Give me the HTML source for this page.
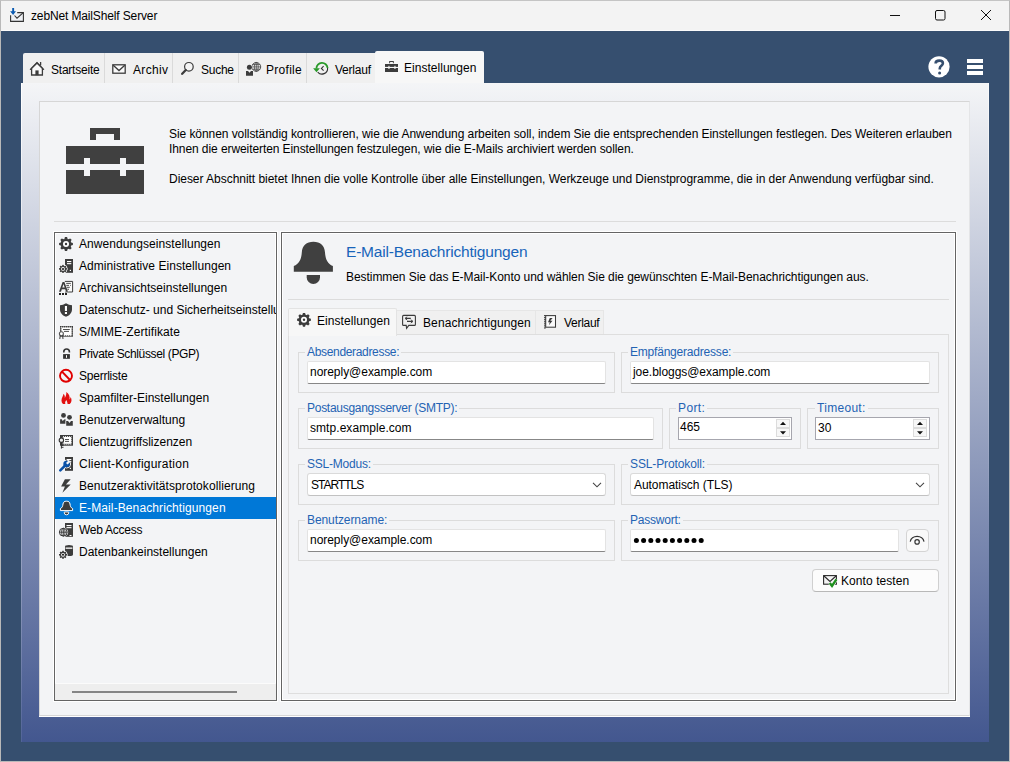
<!DOCTYPE html>
<html><head><meta charset="utf-8">
<style>
*{box-sizing:border-box;margin:0;padding:0}
html,body{width:1010px;height:762px;overflow:hidden}
body{position:relative;background:#364f6f;font-family:"Liberation Sans",sans-serif;font-size:12px;color:#000}
.a{position:absolute}
.t{position:absolute;white-space:nowrap;line-height:14px}
#frame{left:0;top:0;width:1010px;height:762px;border:1px solid #b9b9b9;border-top-color:#c4c4c4}
#title{left:1px;top:1px;width:1008px;height:30px;background:#f3f3f3;border-bottom:1px solid #fbfbfb}
.tab{position:absolute;top:53px;height:30px;background:#f0f0f0;border-right:1px solid #dadada}
.tab .t{top:10px}
#tabact{left:375px;top:51px;width:109px;height:33px;background:#f7f7f7;border-radius:2px 2px 0 0}
#outer{left:21px;top:83px;width:968px;height:659px;background:linear-gradient(#f4f5f7,#43578f)}
#inner{left:39px;top:101px;width:931px;height:615px;background:#f3f4f6;border:1px solid #d6d6d6;border-right-color:#e4e5e7;box-shadow:0 1px 0 #fff}
.li{position:absolute;left:0;width:221px;height:22px}
.li .t{left:24px;top:4px}
.grp{position:absolute;border:1px solid #dcdcdc}
.lbl{position:absolute;color:#2363b3;background:#f3f4f6;padding:0 2px;white-space:nowrap;line-height:14px;letter-spacing:-0.3px}
.inp .t,.dd .t{letter-spacing:-0.08px}
.inp{position:absolute;background:#fff;border:1px solid #e3e3e3;border-bottom:1px solid #878787;border-radius:2px}
.spin{background:#fff;border:1px solid #a6a6ae}
.dd{position:absolute;background:#fff;border:1px solid #dadada;border-bottom-color:#c2c2c2;border-radius:3px}
</style></head><body>
<div class="a" id="frame"></div>
<div class="a" id="title">
  <div class="t" style="left:30px;top:8px;letter-spacing:-0.136px">zebNet MailShelf Server</div>
</div>

<!-- tabs -->
<div class="tab" style="left:23px;width:82px;border-radius:2px 0 0 0"><div class="t" style="left:28px;letter-spacing:-0.222px">Startseite</div></div>
<div class="tab" style="left:105px;width:68px"><div class="t" style="left:28px;letter-spacing:0.340px">Archiv</div></div>
<div class="tab" style="left:173px;width:66px"><div class="t" style="left:28px;letter-spacing:-0.250px">Suche</div></div>
<div class="tab" style="left:239px;width:68px"><div class="t" style="left:27px;letter-spacing:0.283px">Profile</div></div>
<div class="tab" style="left:307px;width:68px;border-right:none"><div class="t" style="left:28px;letter-spacing:-0.217px">Verlauf</div></div>
<div class="a" id="tabact"><div class="t" style="left:29px;top:10px;letter-spacing:0.025px">Einstellungen</div></div>

<div class="a" id="outer"></div>
<div class="a" style="left:21px;top:83px;width:1px;height:659px;background:linear-gradient(#fff,rgba(255,255,255,0.55) 12%,rgba(255,255,255,0.08))"></div>
<div class="a" style="left:988px;top:83px;width:1px;height:659px;background:linear-gradient(rgba(255,255,255,0.5),rgba(255,255,255,0) 70%)"></div>
<div class="a" id="inner"></div>

<!-- header text -->
<div class="t" style="left:169px;top:127px;line-height:15px;letter-spacing:-0.065px">Sie können vollständig kontrollieren, wie die Anwendung arbeiten soll, indem Sie die entsprechenden Einstellungen festlegen. Des Weiteren erlauben</div>
<div class="t" style="left:169px;top:142px;line-height:15px;letter-spacing:-0.083px">Ihnen die erweiterten Einstellungen festzulegen, wie die E-Mails archiviert werden sollen.</div>
<div class="t" style="left:169px;top:172px;line-height:15px;letter-spacing:-0.034px">Dieser Abschnitt bietet Ihnen die volle Kontrolle über alle Einstellungen, Werkzeuge und Dienstprogramme, die in der Anwendung verfügbar sind.</div>
<div class="a" style="left:54px;top:221px;width:902px;height:1px;background:#dcdcdc"></div>

<!-- list -->
<div class="a" id="list" style="left:54px;top:232px;width:223px;height:469px;border:1px solid #646464;overflow:hidden;box-shadow:0 0 0 1px #fff,inset 0 0 0 1px #fff">
  <div class="li" style="top:0"><div class="t" style="letter-spacing:0.064px">Anwendungseinstellungen</div></div>
  <div class="li" style="top:22px"><div class="t" style="letter-spacing:0.048px">Administrative Einstellungen</div></div>
  <div class="li" style="top:44px"><div class="t">Archivansichtseinstellungen</div></div>
  <div class="li" style="top:66px"><div class="t">Datenschutz- und Sicherheitseinstellungen</div></div>
  <div class="li" style="top:88px"><div class="t" style="letter-spacing:0.088px">S/MIME-Zertifikate</div></div>
  <div class="li" style="top:110px"><div class="t" style="letter-spacing:-0.368px">Private Schlüssel (PGP)</div></div>
  <div class="li" style="top:132px"><div class="t" style="letter-spacing:-0.233px">Sperrliste</div></div>
  <div class="li" style="top:154px"><div class="t">Spamfilter-Einstellungen</div></div>
  <div class="li" style="top:176px"><div class="t">Benutzerverwaltung</div></div>
  <div class="li" style="top:198px"><div class="t">Clientzugriffslizenzen</div></div>
  <div class="li" style="top:220px"><div class="t" style="letter-spacing:0.232px">Client-Konfiguration</div></div>
  <div class="li" style="top:242px"><div class="t" style="letter-spacing:0.078px">Benutzeraktivitätsprotokollierung</div></div>
  <div class="li" style="top:264px;background:#0078d7;color:#fff"><div class="t" style="letter-spacing:0.104px">E-Mail-Benachrichtigungen</div></div>
  <div class="li" style="top:286px"><div class="t" style="letter-spacing:-0.256px">Web Access</div></div>
  <div class="li" style="top:308px"><div class="t">Datenbankeinstellungen</div></div>
  <div class="a" style="left:0;top:450px;width:221px;height:17px;background:#eeeeee;border-top:1px solid #fbfbfb"></div>
  <div class="a" style="left:17px;top:458px;width:165px;height:2px;background:#858585"></div>
</div>

<!-- right panel -->
<div class="a" id="rp" style="left:281px;top:232px;width:675px;height:469px;border:1px solid #646464;box-shadow:0 0 0 1px #fff,inset 0 0 0 1px #fff"></div>
<div class="t" style="left:346px;top:243px;font-size:15.5px;line-height:17px;color:#1864ba;letter-spacing:-0.19px">E-Mail-Benachrichtigungen</div>
<div class="t" style="left:346px;top:270px;letter-spacing:-0.06px">Bestimmen Sie das E-Mail-Konto und wählen Sie die gewünschten E-Mail-Benachrichtigungen aus.</div>
<div class="a" style="left:288px;top:299px;width:661px;height:1px;background:#dcdcdc"></div>
<!-- inner tabs -->
<div class="a" style="left:288px;top:334px;width:661px;height:360px;border:1px solid #dedede"></div>
<div class="a" style="left:396px;top:310px;width:140px;height:24px;background:#f0f0f0;border:1px solid #e6e6e6;border-bottom:none"></div>
<div class="a" style="left:535px;top:310px;width:69px;height:24px;background:#f0f0f0;border:1px solid #e6e6e6;border-bottom:none"></div>
<div class="a" style="left:288px;top:308px;width:109px;height:28px;background:#f7f7f7;border:1px solid #e3e3e3;border-bottom:none;border-radius:2px 2px 0 0"></div>
<div class="t" style="left:317px;top:314px;letter-spacing:0.067px">Einstellungen</div>
<div class="t" style="left:423px;top:316px;letter-spacing:0.100px">Benachrichtigungen</div>
<div class="t" style="left:564px;top:316px;letter-spacing:-0.283px">Verlauf</div>

<!-- groups -->
<div class="grp" style="left:298px;top:352px;width:317px;height:41px"></div>
<div class="lbl" style="left:305px;top:345px;letter-spacing:-0.327px">Absenderadresse:</div>
<div class="inp" style="left:307px;top:361px;width:299px;height:23px"><div class="t" style="left:2px;top:3px;letter-spacing:-0.036px">noreply@example.com</div></div>

<div class="grp" style="left:621px;top:352px;width:318px;height:41px"></div>
<div class="lbl" style="left:628px;top:345px;letter-spacing:-0.206px">Empfängeradresse:</div>
<div class="inp" style="left:630px;top:361px;width:300px;height:23px"><div class="t" style="left:2px;top:3px;letter-spacing:-0.047px">joe.bloggs@example.com</div></div>

<div class="grp" style="left:298px;top:408px;width:365px;height:41px"></div>
<div class="lbl" style="left:305px;top:401px;letter-spacing:-0.276px">Postausgangsserver (SMTP):</div>
<div class="inp" style="left:307px;top:417px;width:347px;height:23px"><div class="t" style="left:2px;top:3px;letter-spacing:0.060px">smtp.example.com</div></div>

<div class="grp" style="left:669px;top:408px;width:132px;height:41px"></div>
<div class="lbl" style="left:676px;top:401px;letter-spacing:0.400px">Port:</div>
<div class="a spin" style="left:678px;top:417px;width:114px;height:23px"><div class="t" style="left:1px;top:2px">465</div></div>

<div class="grp" style="left:807px;top:408px;width:132px;height:41px"></div>
<div class="lbl" style="left:815px;top:401px;letter-spacing:0.300px">Timeout:</div>
<div class="a spin" style="left:815px;top:417px;width:115px;height:23px"><div class="t" style="left:2px;top:3px">30</div></div>

<div class="grp" style="left:298px;top:464px;width:317px;height:41px"></div>
<div class="lbl" style="left:305px;top:457px;letter-spacing:-0.211px">SSL-Modus:</div>
<div class="dd" style="left:307px;top:473px;width:299px;height:23px"><div class="t" style="left:3px;top:4px;letter-spacing:-0.993px">STARTTLS</div></div>

<div class="grp" style="left:621px;top:464px;width:318px;height:41px"></div>
<div class="lbl" style="left:628px;top:457px;letter-spacing:-0.115px">SSL-Protokoll:</div>
<div class="dd" style="left:630px;top:473px;width:300px;height:23px"><div class="t" style="left:3px;top:4px;letter-spacing:-0.055px">Automatisch (TLS)</div></div>

<div class="grp" style="left:298px;top:520px;width:317px;height:41px"></div>
<div class="lbl" style="left:305px;top:513px;letter-spacing:-0.083px">Benutzername:</div>
<div class="inp" style="left:307px;top:529px;width:299px;height:23px"><div class="t" style="left:2px;top:3px;letter-spacing:-0.036px">noreply@example.com</div></div>

<div class="grp" style="left:621px;top:520px;width:318px;height:41px"></div>
<div class="lbl" style="left:628px;top:513px;letter-spacing:-0.225px">Passwort:</div>
<div class="inp" style="left:630px;top:529px;width:269px;height:23px"></div>
<div class="a" style="left:906px;top:529px;width:23px;height:23px;background:#f9f9f9;border:1px solid #d4d4d4;border-radius:4px"></div>

<div class="a" style="left:812px;top:569px;width:127px;height:23px;background:#fcfcfc;border:1px solid #d0d0d0;border-bottom-color:#b8b8b8;border-radius:4px"></div>
<div class="t" style="left:841px;top:574px;letter-spacing:0.073px">Konto testen</div>
<svg class="a" style="left:0;top:0" width="1010" height="762" viewBox="0 0 1010 762">
<defs>
<g id="gear"><g fill="#3c3c3c"><circle r="5.3"/><path d="M-1.8,-4.4 L-1.05,-6.9 H1.05 L1.8,-4.4 Z" transform="rotate(0)"/><path d="M-1.8,-4.4 L-1.05,-6.9 H1.05 L1.8,-4.4 Z" transform="rotate(45)"/><path d="M-1.8,-4.4 L-1.05,-6.9 H1.05 L1.8,-4.4 Z" transform="rotate(90)"/><path d="M-1.8,-4.4 L-1.05,-6.9 H1.05 L1.8,-4.4 Z" transform="rotate(135)"/><path d="M-1.8,-4.4 L-1.05,-6.9 H1.05 L1.8,-4.4 Z" transform="rotate(180)"/><path d="M-1.8,-4.4 L-1.05,-6.9 H1.05 L1.8,-4.4 Z" transform="rotate(225)"/><path d="M-1.8,-4.4 L-1.05,-6.9 H1.05 L1.8,-4.4 Z" transform="rotate(270)"/><path d="M-1.8,-4.4 L-1.05,-6.9 H1.05 L1.8,-4.4 Z" transform="rotate(315)"/></g><circle r="3" fill="#fff"/><circle r="1.2" fill="#3c3c3c"/></g>
<g id="sgear"><g fill="#3c3c3c" stroke="#fff" stroke-width="1"><circle r="3.4"/><rect x="-0.8" y="-4.1" width="1.6" height="2" transform="rotate(0)"/><rect x="-0.8" y="-4.1" width="1.6" height="2" transform="rotate(45)"/><rect x="-0.8" y="-4.1" width="1.6" height="2" transform="rotate(90)"/><rect x="-0.8" y="-4.1" width="1.6" height="2" transform="rotate(135)"/><rect x="-0.8" y="-4.1" width="1.6" height="2" transform="rotate(180)"/><rect x="-0.8" y="-4.1" width="1.6" height="2" transform="rotate(225)"/><rect x="-0.8" y="-4.1" width="1.6" height="2" transform="rotate(270)"/><rect x="-0.8" y="-4.1" width="1.6" height="2" transform="rotate(315)"/></g><g fill="#3c3c3c"><circle r="3"/><rect x="-0.8" y="-4" width="1.6" height="2" transform="rotate(0)"/><rect x="-0.8" y="-4" width="1.6" height="2" transform="rotate(45)"/><rect x="-0.8" y="-4" width="1.6" height="2" transform="rotate(90)"/><rect x="-0.8" y="-4" width="1.6" height="2" transform="rotate(135)"/><rect x="-0.8" y="-4" width="1.6" height="2" transform="rotate(180)"/><rect x="-0.8" y="-4" width="1.6" height="2" transform="rotate(225)"/><rect x="-0.8" y="-4" width="1.6" height="2" transform="rotate(270)"/><rect x="-0.8" y="-4" width="1.6" height="2" transform="rotate(315)"/></g><circle r="1.9" fill="#fff"/><circle r="1" fill="#111"/></g>
</defs>
<!-- title app icon -->
<g>
<path d="M17.2,12.6 H23.4 V21.4 H10.6 V15.2" fill="#eef0f4" stroke="#333" stroke-width="1.1"/>
<path d="M14.5,15.5 L17,18.2 L23,12.8" fill="none" stroke="#333" stroke-width="1.1"/>
<path d="M12.2,8 H14.1 V11.2 H16 L13.1,15 L10.1,11.2 H12.2 Z" fill="#0b5bb2"/>
</g>
<!-- window controls -->
<path d="M890,15.5 H900" stroke="#111" stroke-width="1"/>
<rect x="935.5" y="10.5" width="9.5" height="9.5" rx="1.5" fill="none" stroke="#111" stroke-width="1"/>
<path d="M981,10 L991,20 M991,10 L981,20" stroke="#111" stroke-width="1"/>

<!-- tab icons -->
<g fill="none" stroke="#3c3c3c" stroke-width="1.3">
 <path d="M31.6,75 V68.4 L37,63 L42.4,68.4 V75 Z" fill="#fafafa"/>
 <path d="M30.4,69.4 L37,62.6 L43.6,69.4" stroke-linecap="round"/>
 <path d="M40.6,62 V65.4"/>
 <rect x="35.4" y="70.4" width="3.2" height="4.8" fill="#3c3c3c" stroke="none"/>
 <rect x="112.8" y="64.8" width="12.4" height="8.4" fill="#fafafa"/>
 <path d="M113.2,65.2 L119,70.6 L124.8,65.2"/>
 <circle cx="188.9" cy="66.8" r="4.3" fill="#f4f4f4" stroke-width="1.2"/>
 <path d="M185.8,70 L182.2,73.8" stroke-width="2.3" stroke-linecap="round"/>
</g>
<!-- profile -->
<g>
 <circle cx="256.3" cy="66.9" r="4.4" fill="none" stroke="#3c3c3c" stroke-width="0.9"/>
 <path d="M252,66.9 H260.6 M256.3,62.5 V71.3 M252.8,64.6 H259.8 M252.8,69.2 H259.8" stroke="#3c3c3c" stroke-width="0.7"/>
 <ellipse cx="256.3" cy="66.9" rx="2" ry="4.4" fill="none" stroke="#3c3c3c" stroke-width="0.7"/>
 <circle cx="249.4" cy="67.3" r="2.5" fill="#3c3c3c" stroke="#f0f0f0" stroke-width="1.2" paint-order="stroke"/>
 <path d="M246,71 L248,71 L249.5,72.8 L251,71 L253,71 V75.8 H246 Z" fill="#3c3c3c" stroke="#f0f0f0" stroke-width="1" paint-order="stroke"/>
</g>
<!-- verlauf -->
<g>
 <path d="M327.58,67.96 A5.6,5.6 0 0 1 317.71,72.05" fill="none" stroke="#333" stroke-width="1.1"/>
 <path d="M316.40,68.45 A5.6,5.6 0 0 1 327.58,67.96" fill="none" stroke="#2a9a2a" stroke-width="1.8"/>
 <path d="M313.1,68.3 H319.9 L316.5,72.3 Z" fill="#2a9a2a"/>
 <path d="M323.6,66.2 L321.4,68.4 L323.6,70.6" fill="none" stroke="#333" stroke-width="1.1"/>
</g>
<!-- einstellungen small briefcase -->
<g fill="#3c3c3c">
 <path d="M389.2,61 H393.8 V63.2 H392.9 V62.1 H390.1 V63.2 H389.2 Z"/>
 <rect x="385" y="64" width="13" height="2.9"/>
 <rect x="385" y="68" width="13" height="4"/>
 <rect x="388.4" y="65.8" width="1.1" height="3.2" fill="#f7f7f7"/>
 <rect x="394.4" y="65.8" width="1.1" height="3.2" fill="#f7f7f7"/>
</g>
<!-- help + hamburger -->
<circle cx="939" cy="66.8" r="10.6" fill="#fff"/>
<path d="M935.6,63.4 C935.6,61.2 937.2,60.6 939.3,60.6 C941.6,60.6 942.9,61.8 942.9,63.3 C942.9,65.6 939.8,65.9 939.8,68.2 V69.6" fill="none" stroke="#364f6f" stroke-width="2.6"/><circle cx="939.6" cy="72.9" r="1.5" fill="#364f6f"/>
<rect x="967" y="59" width="16" height="4" fill="#fff"/>
<rect x="967" y="65" width="16" height="4" fill="#fff"/>
<rect x="967" y="71" width="16" height="4" fill="#fff"/>

<!-- header briefcase -->
<g fill="#404040">
 <path d="M90,128 H120 V140 H114 V134 H96 V140 H90 Z"/>
 <rect x="66" y="146" width="78" height="18"/>
 <rect x="66" y="170" width="78" height="24"/>
 <rect x="84" y="158" width="6" height="18" fill="#f3f4f6"/>
 <rect x="120" y="158" width="6" height="18" fill="#f3f4f6"/>
</g>

<!-- list icons -->
<use href="#gear" x="66" y="244"/>
<g>
 <rect x="65" y="259" width="8" height="13.8" fill="#3c3c3c"/>
 <rect x="67" y="261" width="4.3" height="1.1" fill="#fff"/>
 <rect x="67" y="263.1" width="4.3" height="1.1" fill="#fff"/>
 <rect x="69.8" y="269.8" width="1.2" height="1.2" fill="#fff"/>
 <use href="#sgear" x="63" y="268.9"/>
</g>
<g>
 <path d="M64.8,281.4 H72.6 V292 H65" fill="#fafafa" stroke="#3c3c3c" stroke-width="1"/>
 <path d="M66.2,283.4 H70.8 M66.2,285.4 H69 M70,285.4 H70.8 M66.6,287.3 H69.8 M67,289.3 H69" stroke="#3c3c3c" stroke-width="0.9"/>
 <path d="M59,291.8 L62.6,282 H64.4 L68,291.8 H66 L65.2,289.2 H61.8 L61,291.8 Z M62.3,287.6 H64.7 L63.5,284 Z" fill="#3c3c3c" stroke="#f3f4f6" stroke-width="0.7" paint-order="stroke"/>
 <rect x="59" y="293" width="2" height="2" fill="#222"/><rect x="62" y="293" width="2" height="2" fill="#222"/><rect x="65" y="293" width="2" height="2" fill="#222"/>
</g>
<g>
 <path d="M66,303.3 C64,304.6 62,305 60,305.3 V309.5 C60,313 62.8,315.6 66,316.8 C69.2,315.6 72,313 72,309.5 V305.3 C70,305 68,304.6 66,303.3 Z" fill="#3c3c3c"/>
 <rect x="64.9" y="306" width="2.1" height="5" fill="#fff"/>
 <rect x="64.9" y="312" width="2.1" height="2" fill="#fff"/>
</g>
<g>
 <rect x="60" y="326" width="13" height="10.7" fill="#3c3c3c"/>
 <rect x="61.5" y="327.5" width="10" height="7.7" fill="#fff"/><rect x="61.1" y="327.1" width="10.8" height="8.5" fill="none" stroke="#fff" stroke-width="1" stroke-dasharray="1 1"/>
 <path d="M63,329.5 H69.8 M64,331.4 H69" stroke="#3c3c3c" stroke-width="0.9"/>
 <circle cx="61.4" cy="333.8" r="2" fill="#fff" stroke="#555" stroke-width="1.1"/>
 <path d="M60.2,335.5 L59.8,339 M62.6,335.5 L63,339" stroke="#3c3c3c" stroke-width="1"/>
</g>
<g>
 <path d="M63.8,352.6 V351.8 A2.8,2.8 0 0 1 69.4,351.8 V352.6" fill="none" stroke="#333" stroke-width="1.6"/>
 <rect x="63.1" y="354.1" width="6.8" height="4.7" fill="#333"/>
 <rect x="66" y="355.2" width="1" height="2.6" fill="#fff"/>
</g>
<g>
 <circle cx="66" cy="375.8" r="6" fill="none" stroke="#e00000" stroke-width="1.9"/>
 <path d="M62,371.6 L70,380" stroke="#e00000" stroke-width="1.9"/>
</g>
<g>
 <path d="M63,404 C61,402.5 61.2,399.2 62.4,397 C62.9,396 63.3,395 63.5,393.8 C64.7,395 65,396.6 64.8,398 C65.7,396.4 66.6,394.4 66.3,392 C69,393.8 70.2,396.6 69.5,399.6 C70.1,399 70.4,398 70.6,397 C72,399.2 71.9,402.6 69.8,404 Z" fill="#e21010"/>
 <path d="M65.4,403.9 C64.8,402.6 65.3,401.2 66.4,400 C66.7,401.2 67.5,402 67.6,403.9 Z" fill="#f3f4f6"/>
</g>
<g fill="#3c3c3c" stroke="#f3f4f6" stroke-width="0.9" paint-order="stroke">
 <circle cx="63.5" cy="415.4" r="2.4"/>
 <path d="M60.1,419.2 H61.8 L62.5,421 L64.7,419.2 H65.5 V423.8 H60.1 Z"/>
 <circle cx="69.5" cy="417.3" r="2.4"/>
 <path d="M66.2,421 H68 L69.5,422.9 L71,421 H72.8 V425.8 H66.2 Z"/>
</g>
<g>
 <rect x="60" y="435" width="13" height="10.7" fill="#3c3c3c"/>
 <rect x="63.5" y="437" width="7.5" height="6.8" fill="#fff"/><rect x="63.1" y="436.6" width="8.3" height="7.6" fill="none" stroke="#fff" stroke-width="1" stroke-dasharray="1 1"/>
 <path d="M65,439.5 H69 M65,441.4 H69" stroke="#3c3c3c" stroke-width="0.9"/>
 <circle cx="61.4" cy="440.2" r="2.2" fill="#eee" stroke="#333" stroke-width="1.1"/>
 <path d="M61.4,442.4 V448.6 M61.4,445.4 H63.5 M61.4,447.3 H63.5" stroke="#333" stroke-width="1"/>
</g>
<g>
 <rect x="65" y="457" width="8" height="13.8" fill="#3c3c3c"/>
 <rect x="67" y="459" width="4.3" height="1.1" fill="#fff"/>
 <rect x="67" y="461.1" width="4.3" height="1.1" fill="#fff"/>
 <rect x="69.8" y="467.8" width="1.2" height="1.2" fill="#fff"/>
 <g stroke="#f3f4f6" stroke-width="1" fill="none"><path d="M60.3,470.3 L64.8,465.8" stroke-width="3.8" stroke-linecap="round"/><circle cx="66.6" cy="464" r="4"/></g>
 <path d="M60.3,470.3 L64.8,465.8" stroke="#0a52a8" stroke-width="2.6" stroke-linecap="round"/>
 <circle cx="66.6" cy="464" r="3.3" fill="#0a52a8"/>
 <path d="M66.8,463.8 L69.5,461.1" stroke="#f3f4f6" stroke-width="2.2"/>
</g>
<path d="M64.9,479.3 H70.7 L65.9,484.5 H70.7 L62.4,492.7 L64.9,486.6 H61.1 Z" fill="#3c3c3c"/>
<g>
 <path d="M60.4,510.6 V508.6 C62.2,507.8 62.8,506 63,504 C63.2,502 64.5,501.2 66.5,501.2 C68.5,501.2 69.8,502 70,504 C70.2,506 70.8,507.8 72.6,508.6 V510.6 Z" fill="#3c3c3c" stroke="#fff" stroke-width="1"/>
 <path d="M64.3,512 H68.7 V512.9 A2.2,1.9 0 0 1 64.3,512.9 Z" fill="#3c3c3c" stroke="#fff" stroke-width="0.9"/>
</g>
<g>
 <rect x="65" y="523" width="8" height="13.8" fill="#3c3c3c"/>
 <rect x="66.5" y="525" width="5" height="1.1" fill="#fff"/>
 <rect x="66.5" y="527.1" width="5" height="1.1" fill="#fff"/>
 <rect x="69.5" y="535" width="2" height="1" fill="#fff"/>
 <circle cx="63.3" cy="532.2" r="4.4" fill="#f3f4f6" stroke="#f3f4f6" stroke-width="1"/>
 <circle cx="63.3" cy="532.2" r="3.9" fill="none" stroke="#333" stroke-width="1"/>
 <path d="M59.4,532.2 H67.2 M63.3,528.3 V536.1" stroke="#333" stroke-width="0.9"/>
 <ellipse cx="63.3" cy="532.2" rx="1.8" ry="3.9" fill="none" stroke="#333" stroke-width="0.8"/>
</g>
<g>
 <path d="M65,546.5 A4,1.5 0 0 1 73,546.5 V554.5 A4,1.5 0 0 1 65,554.5 Z" fill="#3c3c3c"/>
 <path d="M65.6,547.5 H72.4 V548.8 H65.6 Z" fill="#fff"/>
 <use href="#sgear" x="63" y="554.8"/>
</g>

<!-- big bell -->
<g fill="#404040">
 <path d="M293.8,266 C299.5,264 301.4,258.5 301.8,252.5 C302.3,245.5 306.5,241.8 313.4,241.8 C320.3,241.8 324.5,245.5 325,252.5 C325.4,258.5 327.3,264 332.9,266 V271.7 H293.8 Z"/>
 <path d="M306.7,275 H320 V277.2 A6.65,6.8 0 0 1 306.7,277.2 Z"/>
</g>
<!-- inner tab icons -->
<use href="#gear" x="304" y="319.8"/>
<g fill="none" stroke="#3a3a3a" stroke-width="1.1">
 <path d="M403.6,315.4 H414.4 A1,1 0 0 1 415.4,316.4 V324.4 A1,1 0 0 1 414.4,325.4 H408.8 L406.6,328.4 L406.2,325.4 H403.6 A1,1 0 0 1 402.6,324.4 V316.4 A1,1 0 0 1 403.6,315.4 Z"/>
 <path d="M405.5,318.4 H410.8 M407,321.4 H412.6"/>
 <path d="M407.2,316.8 L405,318.4 L407.2,320 M410.8,319.8 L413,321.4 L410.8,323" stroke-width="0.9"/>
</g>
<g>
 <rect x="545.7" y="315.6" width="9.8" height="11.6" fill="#fafafa" stroke="#3a3a3a" stroke-width="1.05"/>
 <g fill="#3a3a3a"><rect x="544" y="315.10" width="1.8" height="1.1"/><rect x="544" y="317.15" width="1.8" height="1.1"/><rect x="544" y="319.20" width="1.8" height="1.1"/><rect x="544" y="321.25" width="1.8" height="1.1"/><rect x="544" y="323.30" width="1.8" height="1.1"/><rect x="544" y="325.35" width="1.8" height="1.1"/><rect x="544" y="327.40" width="1.8" height="1.1"/></g>
 <path d="M549.8,318 H552.6 L550.3,320.8 H552.5 L548.9,325.2 L549.8,322.3 H548 Z" fill="#3a3a3a"/>
</g>
<!-- spinner buttons -->
<g>
 <rect x="776.5" y="419.5" width="13" height="8" fill="#f7f7f7" stroke="#dcdcdc" stroke-width="1"/>
 <rect x="776.5" y="428.5" width="13" height="8" fill="#f7f7f7" stroke="#dcdcdc" stroke-width="1"/>
 <path d="M780,425 H786 L783,421.7 Z M780,431.2 H786 L783,434.5 Z" fill="#111"/>
 <rect x="913.5" y="419.5" width="13" height="8" fill="#f7f7f7" stroke="#dcdcdc" stroke-width="1"/>
 <rect x="913.5" y="428.5" width="13" height="8" fill="#f7f7f7" stroke="#dcdcdc" stroke-width="1"/>
 <path d="M917,425 H923 L920,421.7 Z M917,431.2 H923 L920,434.5 Z" fill="#111"/>
</g>
<!-- chevrons -->
<path d="M593,482.8 L597,486.8 L601,482.8" fill="none" stroke="#444" stroke-width="1.1"/>
<path d="M916,482.8 L920,486.8 L924,482.8" fill="none" stroke="#444" stroke-width="1.1"/>
<g fill="#000"><circle cx="636.4" cy="540.5" r="2.5"/><circle cx="643.6" cy="540.5" r="2.5"/><circle cx="650.8" cy="540.5" r="2.5"/><circle cx="658.0" cy="540.5" r="2.5"/><circle cx="665.2" cy="540.5" r="2.5"/><circle cx="672.4" cy="540.5" r="2.5"/><circle cx="679.6" cy="540.5" r="2.5"/><circle cx="686.8" cy="540.5" r="2.5"/><circle cx="694.0" cy="540.5" r="2.5"/><circle cx="701.2" cy="540.5" r="2.5"/></g>
<!-- eye -->
<path d="M910.2,541.6 A7,6.4 0 0 1 924,541.6" fill="none" stroke="#333" stroke-width="1.2"/>
<circle cx="917.1" cy="541.9" r="2.2" fill="none" stroke="#333" stroke-width="1.2"/>
<!-- konto icon -->
<g>
 <rect x="823.6" y="575.6" width="12.8" height="8.6" fill="#f4f4f4" stroke="#2a2a2a" stroke-width="1.1"/>
 <path d="M824,576 L830,581.4 L836,576" fill="none" stroke="#2a2a2a" stroke-width="1.1"/>
 <path d="M829.8,583 L832,586 L836.4,579.4" fill="none" stroke="#fcfcfc" stroke-width="3.4"/>
 <path d="M829.8,583 L832,586 L836.4,579.4" fill="none" stroke="#1d8f1d" stroke-width="2.4"/>
</g>
</svg>

</body></html>
